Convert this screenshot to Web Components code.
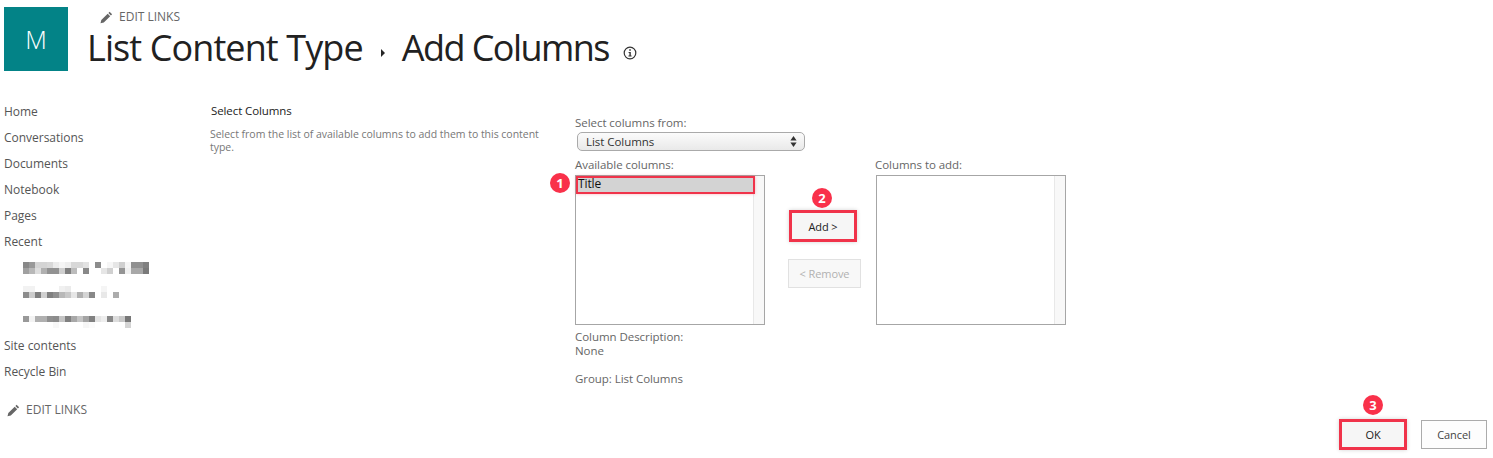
<!DOCTYPE html>
<html lang="en">
<head>
<meta charset="utf-8">
<title>Add Columns</title>
<style>
  html, body { margin: 0; background: #fff; }
  body { font-family: "Open Sans", "Noto Sans", sans-serif; width: 1493px; height: 458px; overflow: hidden; }
</style>
</head>
<body>
<site-page>
  <site-header slot="header" initial="M">
    <span slot="crumb">List Content Type</span>
    <span slot="page">Add Columns</span>
  </site-header>
  <quick-nav slot="nav">
    <nav-link>Home</nav-link>
    <nav-link>Conversations</nav-link>
    <nav-link>Documents</nav-link>
    <nav-link>Notebook</nav-link>
    <nav-link>Pages</nav-link>
    <nav-link>Recent</nav-link>
    <blurred-link rows="888 999 d4 d4 d8 eb f5 ee d8 d8 e2 ff 8c ff f6 e6 cf f5 90 90 80|a0 b8 dd b0 92 92 cf 80 bc ff 88 ff ff e6 d0 ff 94 f0 a8 a8 7a" top="7"></blurred-link>
    <blurred-link rows="f2 f2 ff ff ff ff f0 eb ff ff ff ff ff f5 ff ff|8c cc 80 d0 80 90 b8 c8 e6 b0 d4 88 ff e8 ff ac" top="5"></blurred-link>
    <blurred-link rows="99 f3 b0 b0 90 8c c4 80 a8 c4 a4 80 e4 ee 88 dd c8 77|ff ff ff ff ff f8 ff ff ff ff f6 fb ff ff ff ff ff d4" top="9"></blurred-link>
    <nav-link>Site contents</nav-link>
    <nav-link>Recycle Bin</nav-link>
    <edit-links class="nav-edit"></edit-links>
  </quick-nav>
  <column-form slot="main"></column-form>
</site-page>

<script>
const PENCIL = `<svg width="13" height="13" viewBox="0 0 13 13" aria-hidden="true">
  <path fill="#666" d="M9.6 .8l2.5 2.5-1.2 1.2-2.5-2.5zM7.7 2.7l2.5 2.5-6.4 6.3-3.3.8.8-3.3z"/></svg>`;

/** Whole page: header on top, nav and form side by side. */
class SitePage extends HTMLElement {
  constructor() {
    super();
    this.attachShadow({mode: 'open'}).innerHTML = `<style>
    :host { display: block; }
    .body { display: grid; grid-template-columns: 210px 1fr; margin-top: 27px; }
    </style>
    <slot name="header"></slot>
    <div class="body"><slot name="nav"></slot><slot name="main"></slot></div>`;
  }
}
customElements.define('site-page', SitePage);

class SiteHeader extends HTMLElement {
  constructor() {
    super();
    this.attachShadow({mode: 'open'}).innerHTML = `<style>
    :host { display: flex; gap: 20px; padding: 7px 0 0 4px; height: 64px; }
    .logo { width: 64px; height: 64px; background: #038387; color: #fff; display: flex;
      align-items: center; justify-content: center; font-size: 25px; font-weight: 300; }
    .text { display: flex; flex-direction: column; }
    edit-links { margin: 4px 0 0 12px; height: 12px; }
    h1 { margin: 1px 0 0 -1px; font-size: 36px; line-height: 48px; font-weight: 400; color: #212121;
      display: flex; align-items: center; white-space: nowrap; }
    ::slotted([slot="crumb"]) { letter-spacing: -.9px; }
    ::slotted([slot="page"]) { letter-spacing: -1.55px; }
    .arrow { width: 0; height: 0; border-left: 4px solid #262626; border-top: 4px solid transparent;
      border-bottom: 4px solid transparent; margin: 10px 17px 0 18px; }
    svg { margin: 9px 0 0 14px; }
    </style>
    <div class="logo">${this.getAttribute('initial')}</div>
    <div class="text">
      <edit-links></edit-links>
      <h1><slot name="crumb"></slot><span class="arrow"></span><slot name="page"></slot>
        <svg width="14" height="14" viewBox="0 0 14 14" aria-hidden="true">
          <circle cx="7" cy="7" r="5.8" fill="none" stroke="#333" stroke-width="1.2"/>
          <path fill="#333" d="M6.2 3.3h1.6v1.5H6.2zM5.6 6h2.2v3.6h.8v1H5.4v-1h1V7h-.8z"/></svg>
      </h1>
    </div>`;
  }
}
customElements.define('site-header', SiteHeader);

class EditLinks extends HTMLElement {
  constructor() {
    super();
    this.attachShadow({mode: 'open'}).innerHTML = `<style>
    :host { display: flex; align-items: center; gap: 6px; font-size: 12px; line-height: 14px;
      color: #666; }
    :host(.nav-edit) { margin: 18px 0 0 3px; }
    svg { display: block; }
    </style>${PENCIL}<span>EDIT LINKS</span>`;
  }
}
customElements.define('edit-links', EditLinks);

class QuickNav extends HTMLElement {
  constructor() {
    super();
    this.attachShadow({mode: 'open'}).innerHTML = `<style>
    :host { display: block; padding: 1px 0 0 4px; }
    </style><slot></slot>`;
  }
}
customElements.define('quick-nav', QuickNav);

class NavLink extends HTMLElement {
  constructor() {
    super();
    this.attachShadow({mode: 'open'}).innerHTML = `<style>
    :host { display: block; height: 26px; line-height: 26px; font-size: 12px; color: #555;
      letter-spacing: -.02px; }
    </style><slot></slot>`;
  }
}
customElements.define('nav-link', NavLink);

/** Nav entry whose label was pixelated in the screenshot; rows are grey levels, one per 6px cell. */
class BlurredLink extends HTMLElement {
  constructor() {
    super();
    const cells = this.getAttribute('rows').split('|').map((row) => {
      return row.split(' ').map((v) => {
        const g = v.slice(0, 2);
        return `<i style="background:#${g}${g}${g}"></i>`;
      }).join('');
    }).map((row) => `<div class="row">${row}</div>`).join('');
    this.attachShadow({mode: 'open'}).innerHTML = `<style>
    :host { display: block; height: 26px; box-sizing: border-box; padding: ${this.getAttribute('top')}px 0 0 19px; }
    .row { display: flex; height: 6px; }
    i { display: block; width: 6px; height: 6px; }
    </style>${cells}`;
  }
}
customElements.define('blurred-link', BlurredLink);

class StepBadge extends HTMLElement {
  constructor() {
    super();
    this.attachShadow({mode: 'open'}).innerHTML = `<style>
    :host { position: absolute; width: 20px; height: 20px; border-radius: 50%; background: #f9314a;
      color: #fff; font-size: 13px; font-weight: 700; line-height: 20px; text-align: center; }
    </style><slot></slot>`;
  }
}
customElements.define('step-badge', StepBadge);

class PushButton extends HTMLElement {
  constructor() {
    super();
    this.attachShadow({mode: 'open'}).innerHTML = `<style>
    :host { display: flex; align-items: center; justify-content: center; box-sizing: border-box;
      position: relative; border: 1px solid #ababab; background: #fdfdfd; color: #444; font-size: 11px;
      height: 30px; letter-spacing: -.1px; }
    :host([marked]) { border: 3px solid #f0334a; background: #f6f6f6; color: #222;
      box-shadow: 0 0 4px rgba(0,0,0,.18); }
    :host([disabled]) { border-color: #e1e1e1; background: #f8f8f8; color: #b1b1b1; }
    </style><slot></slot>`;
  }
}
customElements.define('push-button', PushButton);

class ListBox extends HTMLElement {
  constructor() {
    super();
    this.attachShadow({mode: 'open'}).innerHTML = `<style>
    :host { display: flex; box-sizing: border-box; width: 190px; height: 150px; border: 1px solid #a6a6a6;
      background: #fff; position: relative; }
    .items { flex: 1; min-width: 0; }
    .track { width: 10px; background: #f8f8f8; border-left: 1px solid #e8e8e8; }
    </style><div class="items"><slot></slot></div><div class="track"></div>`;
  }
}
customElements.define('list-box', ListBox);

class ListOption extends HTMLElement {
  constructor() {
    super();
    this.attachShadow({mode: 'open'}).innerHTML = `<style>
    :host { display: block; position: relative; box-sizing: border-box; height: 18px; margin-right: -2px;
      border: 2px solid #f0334a; background: #d3d3d3; color: #111; font-size: 12px; line-height: 12px;
      box-shadow: 0 0 3px rgba(240,51,74,.35); letter-spacing: -.1px; }
    </style><slot></slot>`;
  }
}
customElements.define('list-option', ListOption);

class ColumnForm extends HTMLElement {
  constructor() {
    super();
    this.attachShadow({mode: 'open'}).innerHTML = `<style>
    :host { display: block; height: 333px; position: relative; font-size: 11.5px; color: #666; }
    .section { display: grid; grid-template-columns: 365px 1fr; }
    h2 { margin: 5px 0 0 1px; font-size: 11.5px; line-height: 15px; font-weight: 400; color: #222; letter-spacing: -.1px; }
    .desc { margin: 10px 0 0; width: 340px; line-height: 13px; font-size: 10.5px; color: #777; letter-spacing: -.02px; }
    .label { line-height: 14px; letter-spacing: -.05px; }
    .from { margin-top: 18px; }
    .select { display: flex; align-items: center; justify-content: space-between; box-sizing: border-box;
      width: 228px; height: 19px; margin: 2px 0 7px 2px; padding: 0 7px 0 8px; border: 1px solid #aaa; border-radius: 5px;
      background: linear-gradient(#fbfbfb, #e9e9e9); color: #333; letter-spacing: -.05px; }
    .pick { display: flex; }
    .pick .label { margin-bottom: 3px; }
    .first { position: relative; }
    .move { width: 73px; margin: 0 15px 0 23px; padding-top: 52px; display: flex; flex-direction: column; }
    .add { width: 68px; height: 32px; margin-left: 1px; }
    .remove { height: 29px; margin-top: 17px; }
    .info { margin-top: 5px; line-height: 14px; letter-spacing: -.05px; }
    .group { margin-top: 14px; }
    .actions { position: absolute; right: 6px; top: 321px; display: flex; gap: 14px; align-items: center; }
    .ok { width: 68px; height: 31px; }
    .cancel { width: 66px; height: 29px; }
    </style>
    <div class="section">
      <div>
        <h2>Select Columns</h2>
        <p class="desc">Select from the list of available columns to add them to this content type.</p>
      </div>
      <div>
        <div class="label from">Select columns from:</div>
        <div class="select"><span>List Columns</span>
          <svg width="7" height="11" viewBox="0 0 7 11" aria-hidden="true"><path fill="#333" d="M3.5 0L6.6 4.4H.4zM3.5 11L.4 6.6h6.2z"/></svg>
        </div>
        <div class="pick">
          <div class="first">
            <div class="label">Available columns:</div>
            <list-box><list-option>Title</list-option></list-box>
            <step-badge style="left:-25px;top:15px">1</step-badge>
          </div>
          <div class="move">
            <push-button class="add" marked>Add &gt;
              <step-badge style="left:20px;top:-25px">2</step-badge>
            </push-button>
            <push-button class="remove" disabled>&lt; Remove</push-button>
          </div>
          <div>
            <div class="label" style="margin-left:-1px">Columns to add:</div>
            <list-box></list-box>
          </div>
        </div>
        <div class="info">Column Description:<br>None<div class="group">Group: List Columns</div></div>
      </div>
    </div>
    <div class="actions">
      <push-button class="ok" marked>OK
        <step-badge style="left:21px;top:-27px">3</step-badge>
      </push-button>
      <push-button class="cancel">Cancel</push-button>
    </div>`;
  }
}
customElements.define('column-form', ColumnForm);
</script>
</body>
</html>
